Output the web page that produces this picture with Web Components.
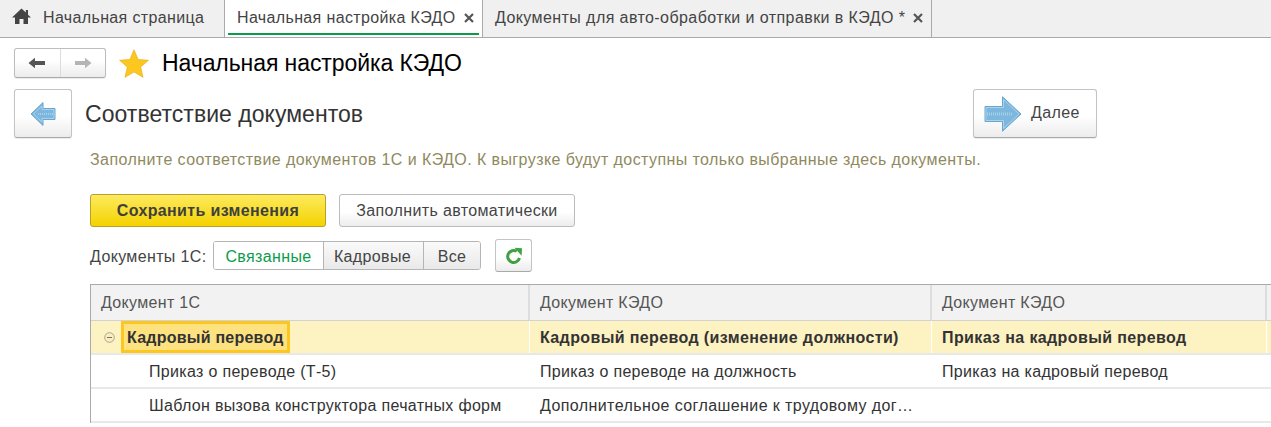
<!DOCTYPE html>
<html lang="ru">
<head>
<meta charset="utf-8">
<title>Начальная настройка КЭДО</title>
<style>
html, body { margin: 0; height: 100%; overflow: hidden; background: #fff; }
body { font: 16px "Liberation Sans", Arial, sans-serif; letter-spacing: .36px; color: #333; }
</style>
</head>
<body>
<kedo-tabs></kedo-tabs>
<kedo-nav title-text="Начальная настройка КЭДО"></kedo-nav>
<kedo-step heading="Соответствие документов"></kedo-step>
<kedo-hint>Заполните соответствие документов 1С и КЭДО. К выгрузке будут доступны только выбранные здесь документы.</kedo-hint>
<kedo-actions></kedo-actions>
<kedo-filter></kedo-filter>
<kedo-table></kedo-table>

<script>
const closeIcon = `<svg width="10" height="10" viewBox="0 0 10 10"><path d="M1 1l8 8M9 1L1 9" stroke="#555" stroke-width="2.200" fill="none"/></svg>`;

class KedoTabs extends HTMLElement {
  constructor() {
    super();
    this.attachShadow({mode: 'open'}).innerHTML = `
<style>
:host { display: flex; height: 37px; background: #f0f0f0; border-bottom: 1px solid #aaa; color: #444; }
.tab { display: flex; align-items: center; box-sizing: border-box; height: 37px; border-right: 1px solid #aaa; position: relative; white-space: nowrap; }
.home { width: 225px; padding-left: 11px; gap: 11px; }
.active { width: 258px; background: #fff; padding-left: 12px; gap: 8px; }
.active::after { content: ""; position: absolute; left: 3px; right: 3px; bottom: 2px; height: 2px; background: #0b9c4b; }
.other { width: 449px; padding-left: 12px; gap: 8px; letter-spacing: .42px; }
span { display: block; padding-bottom: 1px; }
svg { flex: none; margin-bottom: 2px; }
</style>
<div class="tab home">
  <svg width="21" height="18" viewBox="0 0 21 18" style="margin-bottom:5px"><path d="M10.500 1.500L1 10.500h3V17h4.500v-5h4v5H17v-6.500h3l-3-2.800V3h-2.200v2.600z" fill="#444"/></svg>
  <span>Начальная страница</span>
</div>
<div class="tab active"><span>Начальная настройка КЭДО</span>${closeIcon}</div>
<div class="tab other"><span>Документы для авто-обработки и отправки в КЭДО *</span>${closeIcon}</div>`;
  }
}
customElements.define('kedo-tabs', KedoTabs);

class KedoNav extends HTMLElement {
  constructor() {
    super();
    this.attachShadow({mode: 'open'}).innerHTML = `
<style>
:host { display: flex; align-items: center; height: 30px; margin: 10px 0 0 14px; }
.group { display: flex; width: 92px; height: 30px; box-sizing: border-box; border: 1px solid #bdbdbd; border-bottom-color: #a9a9a9; border-radius: 3px; background: linear-gradient(#fff 40%, #ececec); box-shadow: 0 1px 1px rgba(0,0,0,.08); }
.group div { flex: 1; display: flex; align-items: center; justify-content: center; }
.group div + div { border-left: 1px solid #dcdcdc; }
.star { margin-left: 13px; flex: none; }
h1 { margin: 0 0 0 13px; font: 400 23px "Liberation Sans", Arial, sans-serif; letter-spacing: -.08px; color: #000; white-space: nowrap; }
</style>
<div class="group">
  <div><svg width="18" height="12" viewBox="0 0 18 12"><path d="M0.500 6L7 .8V4h10v4H7v3.200z" fill="#555"/></svg></div>
  <div><svg width="18" height="12" viewBox="0 0 18 12"><path d="M17.500 6L11 .8V4H1v4h10v3.200z" fill="#b5b5b5"/></svg></div>
</div>
<svg class="star" width="30" height="29" viewBox="0 0 30 29"><path d="M15 .8l4.100 9.700 10.300.8-7.800 6.800 2.400 10.200L15 22.900 6 28.300l2.400-10.200L.6 11.300l10.300-.8z" fill="#fcc81f" stroke="#e8ae12" stroke-width=".7"/></svg>
<h1 id="t"></h1>`;
    this.shadowRoot.getElementById('t').textContent = this.getAttribute('title-text');
  }
}
customElements.define('kedo-nav', KedoNav);

class KedoStep extends HTMLElement {
  constructor() {
    super();
    this.attachShadow({mode: 'open'}).innerHTML = `
<style>
:host { display: flex; align-items: center; height: 49px; margin: 11px 174px 0 14px; }
.btn { display: flex; align-items: center; box-sizing: border-box; height: 49px; border: 1px solid #c4c4c4; border-bottom-color: #a9a9a9; border-radius: 3px; background: linear-gradient(#fff 55%, #ececec); box-shadow: 0 1px 1px rgba(0,0,0,.08); flex: none; }
.back { width: 58px; padding-left: 15px; }
.next { width: 124px; padding-left: 10px; gap: 9px; color: #444; margin-left: auto; }
.next span { padding-bottom: 2px; }
h2 { margin: 0 0 0 13px; padding-top: 1px; font: 400 23px "Liberation Sans", Arial, sans-serif; letter-spacing: .04px; color: #333; white-space: nowrap; }
svg { flex: none; }
</style>
<div class="btn back"><svg width="26" height="26" viewBox="0 0 26 26">
  <path d="M1 13L13 1.500V7.500h12v11H13v6z" fill="#7db7dd" stroke="#6aa6cf"/>
  <path d="M3.500 13L12 5v3.500h12v9H12V21z" fill="none" stroke="#a9d2ec"/>
  <path d="M8 13h15" stroke="#a6cfe9" stroke-width="2" stroke-dasharray="1 1"/>
</svg></div>
<h2 id="h"></h2>
<div class="btn next"><svg width="38" height="36" viewBox="0 0 38 36">
  <path d="M37 18L18.500 .8V10.500H1v15h17.500v9.700z" fill="#7db7dd" stroke="#6aa6cf"/>
  <path d="M35 18L19.500 3.500v8H2v13h17.500v8z" fill="none" stroke="#a9d2ec"/>
  <path d="M3 18h26" stroke="#a6cfe9" stroke-width="3" stroke-dasharray="1 1"/>
</svg><span>Далее</span></div>`;
    this.shadowRoot.getElementById('h').textContent = this.getAttribute('heading');
  }
}
customElements.define('kedo-step', KedoStep);

class KedoHint extends HTMLElement {
  constructor() {
    super();
    this.attachShadow({mode: 'open'}).innerHTML = `
<style>
:host { display: block; margin: 13px 0 0 90px; height: 18px; line-height: 18px; color: #8f8a5e; letter-spacing: .42px; white-space: nowrap; }
</style><slot></slot>`;
  }
}
customElements.define('kedo-hint', KedoHint);

class KedoActions extends HTMLElement {
  constructor() {
    super();
    this.attachShadow({mode: 'open'}).innerHTML = `
<style>
:host { display: flex; gap: 13px; margin: 25px 0 0 90px; }
div { display: flex; align-items: center; justify-content: center; box-sizing: border-box; width: 236px; height: 33px; border-radius: 3px; }
.save { background: linear-gradient(#fdea5e, #f4d300); border: 1px solid #b9a02a; font-weight: 700; color: #3f3f3f; }
.auto { background: linear-gradient(#fff 55%, #ececec); border: 1px solid #bcbcbc; color: #444; }
</style>
<div class="save">Сохранить изменения</div><div class="auto">Заполнить автоматически</div>`;
  }
}
customElements.define('kedo-actions', KedoActions);

class KedoFilter extends HTMLElement {
  constructor() {
    super();
    this.attachShadow({mode: 'open'}).innerHTML = `
<style>
:host { display: flex; align-items: center; height: 33px; margin: 12px 0 0 90px; color: #444; }
.label { width: 123px; padding-top: 2px; white-space: nowrap; }
.seg { display: flex; height: 29px; box-sizing: border-box; border: 1px solid #b5b5b5; border-radius: 3px; overflow: hidden; }
.seg div { display: flex; align-items: center; justify-content: center; box-sizing: border-box; padding-top: 2px; background: linear-gradient(#fafafa, #e9e9e9); border-left: 1px solid #b5b5b5; }
.seg .on { background: #fff; color: #0b9c4b; border-left: 0; width: 109px; }
.seg .mid { width: 100px; padding-right: 2px; }
.refresh { display: flex; align-items: center; justify-content: center; box-sizing: border-box; width: 37px; height: 33px; margin-left: 14px; border: 1px solid #c4c4c4; border-bottom-color: #a9a9a9; border-radius: 3px; background: linear-gradient(#fff 55%, #ececec); }
</style>
<span class="label">Документы 1С:</span>
<div class="seg"><div class="on">Связанные</div><div class="mid">Кадровые</div><div style="width:57px">Все</div></div>
<div class="refresh"><svg width="18" height="18" viewBox="0 0 18 18"><path d="M14.500 11A6 6 0 1 1 11.800 4.300" fill="none" stroke="#3fa142" stroke-width="3"/><path d="M9.500 .8l7.500 .4-.4 7.600z" fill="#3fa142"/></svg></div>`;
  }
}
customElements.define('kedo-filter', KedoFilter);

class KedoTable extends HTMLElement {
  constructor() {
    super();
    const rows = [
      ['Кадровый перевод', 'Кадровый перевод (изменение должности)', 'Приказ на кадровый перевод'],
      ['Приказ о переводе (Т-5)', 'Приказ о переводе на должность', 'Приказ на кадровый перевод'],
      ['Шаблон вызова конструктора печатных форм', 'Дополнительное соглашение к трудовому дог…', '']
    ];
    const cells = (r, i) => r.map((t, c) => {
      if (i === 0 && c === 0) return `<div class="c first"><svg width="11" height="11" viewBox="0 0 11 11"><circle cx="5.500" cy="5.500" r="4.800" fill="#fbeebd" stroke="#a8a595"/><path d="M3 5.500h5" stroke="#77756a"/></svg><b>${t}</b></div>`;
      if (c === 0) return `<div class="c child">${t}</div>`;
      return `<div class="c${t.endsWith('…') ? ' cut' : ''}">${t}</div>`;
    }).join('') + '<div class="c"></div>';
    this.attachShadow({mode: 'open'}).innerHTML = `
<style>
:host { display: block; margin: 12px 0 0 90px; border-top: 1px solid #aaa; border-left: 1px solid #aaa; letter-spacing: .32px; color: #333; }
.row { display: grid; grid-template-columns: 439px 402px 335px 1fr; height: 34px; box-sizing: border-box; border-bottom: 2px solid #e8e8e8; }
.head { height: 36px; background: #f2f2f2; color: #555; border-bottom: 1px solid #d2d2d2; }
.head .c { border-right: 2px solid #ddd; padding-top: 0; }
.c { display: flex; align-items: center; box-sizing: border-box; padding: 2px 0 0 10px; white-space: nowrap; overflow: hidden; border-right: 1px solid transparent; }
.cut { letter-spacing: .41px; }
.sel { background: #fdf2c2; font-weight: 700; letter-spacing: .38px; }
.sel .c { border-right: 1px solid #fff; }
.first { padding: 0 0 0 13px; gap: 6px; }
.first b { display: block; box-sizing: border-box; height: 32px; line-height: 28px; padding: 0 3px 0 3px; background: #fde27f; border: 3px solid #fcc81f; letter-spacing: .23px; }
.child { padding-left: 58px; }
</style>
<div class="row head"><div class="c">Документ 1С</div><div class="c">Документ КЭДО</div><div class="c">Документ КЭДО</div><div class="c"></div></div>
${rows.map((r, i) => `<div class="row${i === 0 ? ' sel' : ''}">${cells(r, i)}</div>`).join('')}`;
  }
}
customElements.define('kedo-table', KedoTable);
</script>
</body>
</html>
